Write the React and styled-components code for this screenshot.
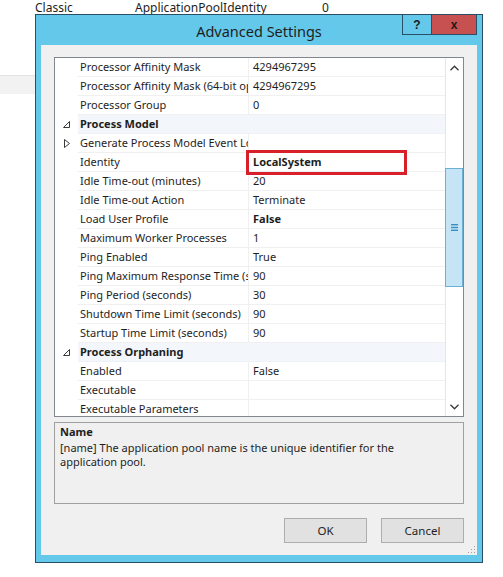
import React from "react";
import styled, { createGlobalStyle } from "styled-components";

const Global = createGlobalStyle`
  html, body { margin: 0; padding: 0; background: #ffffff; }
  body {
    font-family: "Noto Sans", "Open Sans", "Liberation Sans", sans-serif;
    font-size: 11px;
    color: #1e1e1e;
  }
`;

const Desktop = styled.div`
  position: relative;
  width: 503px;
  height: 577px;
  overflow: hidden;
  background: #ffffff;
`;

/* list view of the manager window behind the dialog */
const ListHeader = styled.div`
  display: grid;
  grid-template-columns: 100px 187px 1fr;
  padding-left: 35px;
  height: 14px;
  line-height: 15px;
  font-size: 12px;
  color: #1e1e1e;
  overflow: hidden;
`;

const ListRow = styled.div`
  margin-top: 61px;
  height: 18px;
  width: 40px;
  background: #f2f2f2;
  border-top: 1px solid #e4e4e4;
`;

/* the dialog window */
const Window = styled.div`
  position: absolute;
  left: 35px;
  top: 14px;
  width: 448px;
  height: 549px;
  box-sizing: border-box;
  border: 1px solid #2a4e63;
  background: #63c8e9;
  display: flex;
  flex-direction: column;
  padding: 0 5px 7px 5px;
`;

const TitleBar = styled.div`
  display: grid;
  grid-template-columns: 76px 1fr 76px;
  height: 30px;
  flex: none;
`;

const Title = styled.div`
  grid-column: 2;
  text-align: center;
  font-size: 14.5px;
  line-height: 30px;
  padding-top: 1px;
  color: #1e1e1e;
`;

const Caption = styled.div`
  grid-column: 3;
  display: flex;
  justify-content: flex-end;
  align-items: flex-start;
  margin-top: -1px;
`;

const CaptionButton = styled.div`
  height: 21px;
  width: ${(p) => p.$w}px;
  box-sizing: border-box;
  border: 1px solid #2a4e63;
  background: ${(p) => (p.$close ? "#c75050" : "#63c8e9")};
  margin-left: ${(p) => (p.$close ? "-1px" : "0")};
  display: flex;
  align-items: center;
  justify-content: center;
  font-family: "Liberation Sans", sans-serif;
  font-weight: bold;
  font-size: 12px;
  color: #1b1b1b;
`;

const Client = styled.div`
  flex: 1;
  background: #f0f0f0;
  display: flex;
  flex-direction: column;
  padding: 12px 13px 12px 13px;
  position: relative;
`;

const Grid = styled.div`
  height: 360px;
  box-sizing: border-box;
  border: 1px solid #82878f;
  background: #ffffff;
  display: flex;
  overflow: hidden;
  flex: none;
`;

const Rows = styled.div`
  flex: 1;
  display: flex;
  flex-direction: column;
  overflow: hidden;
`;

const Row = styled.div`
  display: grid;
  grid-template-columns: 23px 171px 1fr;
  height: 19px;
  flex: none;
`;

const Gutter = styled.div`
  display: flex;
  align-items: center;
  justify-content: center;
`;

const NameCell = styled.div`
  background: ${(p) => (p.$category ? "#f3f6fa" : "#ffffff")};
  border-bottom: 1px solid ${(p) => (p.$category ? "#eef1f6" : "#f0f0f0")};
  border-right: 1px solid ${(p) => (p.$category ? "#f3f6fa" : "#f0f0f0")};
  padding-left: 2px;
  line-height: 18px;
  white-space: nowrap;
  overflow: hidden;
  text-overflow: clip;
  font-weight: ${(p) => (p.$category ? "bold" : "normal")};
`;

const ValueCell = styled.div`
  position: relative;
  background: ${(p) => (p.$category ? "#f3f6fa" : "#ffffff")};
  border-bottom: 1px solid ${(p) => (p.$category ? "#eef1f6" : "#f0f0f0")};
  padding-left: 4px;
  line-height: 18px;
  white-space: nowrap;
  font-weight: ${(p) => (p.$bold ? "bold" : "normal")};
`;

const Highlight = styled.div`
  position: absolute;
  z-index: 2;
  left: -3px;
  top: -3px;
  width: 161px;
  height: 25px;
  box-sizing: border-box;
  border: 3px solid #d8202a;
  pointer-events: none;
`;

const HighlightText = styled.span`
  position: relative;
  font-weight: bold;
`;

const ScrollBar = styled.div`
  width: 17px;
  flex: none;
  display: flex;
  flex-direction: column;
  background: #ffffff;
  border-left: 1px solid #e6e6e6;
`;

const ArrowButton = styled.div`
  height: 19px;
  display: flex;
  align-items: center;
  justify-content: center;
  flex: none;
`;

const Track = styled.div`
  flex: 1;
  display: flex;
  flex-direction: column;
  padding-top: 91px;
`;

const Thumb = styled.div`
  height: 119px;
  box-sizing: border-box;
  margin-left: -1px;
  background: #c5e5f6;
  border: 1px solid #6cb0d6;
  display: flex;
  align-items: center;
  justify-content: center;
`;

const Description = styled.div`
  margin-top: 5px;
  height: 82px;
  box-sizing: border-box;
  border: 1px solid #a0a0a0;
  background: #f0f0f0;
  padding: 1px 5px;
  flex: none;
`;

const DescTitle = styled.div`
  font-weight: bold;
  line-height: 16px;
`;

const DescText = styled.div`
  line-height: 14px;
  padding-top: 1px;
  width: 340px;
`;

const Footer = styled.div`
  margin-top: 14px;
  display: flex;
  justify-content: flex-end;
  gap: 14px;
`;

const Button = styled.div`
  width: 83px;
  height: 25px;
  box-sizing: border-box;
  border: 1px solid #adadad;
  background: #e1e1e1;
  display: flex;
  align-items: center;
  justify-content: center;
  font-size: 11.5px;
`;

const Grip = styled.svg`
  position: absolute;
  right: 1px;
  bottom: 1px;
`;

const rows = [
  { name: "Processor Affinity Mask", value: "4294967295" },
  { name: "Processor Affinity Mask (64-bit option)", value: "4294967295" },
  { name: "Processor Group", value: "0" },
  { name: "Process Model", category: true },
  { name: "Generate Process Model Event Log Entry", collapsed: true },
  { name: "Identity", value: "LocalSystem", marked: true },
  { name: "Idle Time-out (minutes)", value: "20" },
  { name: "Idle Time-out Action", value: "Terminate" },
  { name: "Load User Profile", value: "False", bold: true },
  { name: "Maximum Worker Processes", value: "1" },
  { name: "Ping Enabled", value: "True" },
  { name: "Ping Maximum Response Time (seconds)", value: "90" },
  { name: "Ping Period (seconds)", value: "30" },
  { name: "Shutdown Time Limit (seconds)", value: "90" },
  { name: "Startup Time Limit (seconds)", value: "90" },
  { name: "Process Orphaning", category: true },
  { name: "Enabled", value: "False" },
  { name: "Executable", value: "" },
  { name: "Executable Parameters", value: "" },
];

const ExpandedGlyph = () => (
  <svg width="7" height="7" viewBox="0 0 7 7">
    <path d="M6.5 0.5 L6.5 6.5 L0.5 6.5 Z" fill="none" stroke="#3a3a3a" strokeWidth="1" />
  </svg>
);

const CollapsedGlyph = () => (
  <svg width="6" height="9" viewBox="0 0 6 9">
    <path d="M0.5 0.5 L5.5 4.5 L0.5 8.5 Z" fill="none" stroke="#3a3a3a" strokeWidth="1" />
  </svg>
);

const Chevron = ({ down }) => (
  <svg width="9" height="6" viewBox="0 0 9 6">
    <path
      d={down ? "M0.5 0.8 L4.5 4.8 L8.5 0.8" : "M0.5 5.2 L4.5 1.2 L8.5 5.2"}
      fill="none"
      stroke="#3a3a3a"
      strokeWidth="1.3"
    />
  </svg>
);

const GripLines = () => (
  <svg width="7" height="7" viewBox="0 0 7 7">
    <rect x="0" y="0" width="7" height="1.4" fill="#3a8fc0" />
    <rect x="0" y="2.8" width="7" height="1.4" fill="#3a8fc0" />
    <rect x="0" y="5.6" width="7" height="1.4" fill="#3a8fc0" />
  </svg>
);

export default function App() {
  return (
    <Desktop>
      <Global />
      <ListHeader>
        <span>Classic</span>
        <span>ApplicationPoolIdentity</span>
        <span>0</span>
      </ListHeader>
      <ListRow />

      <Window>
        <TitleBar>
          <Title>Advanced Settings</Title>
          <Caption>
            <CaptionButton $w={30}>?</CaptionButton>
            <CaptionButton $w={46} $close>x</CaptionButton>
          </Caption>
        </TitleBar>

        <Client>
          <Grid>
            <Rows>
              {rows.map((r) => (
                <Row key={r.name}>
                  <Gutter>
                    {r.category && <ExpandedGlyph />}
                    {r.collapsed && <CollapsedGlyph />}
                  </Gutter>
                  <NameCell $category={r.category}>{r.name}</NameCell>
                  <ValueCell $category={r.category} $bold={r.bold}>
                    {r.marked ? (
                      <>
                        <Highlight />
                        <HighlightText>{r.value}</HighlightText>
                      </>
                    ) : (
                      r.value
                    )}
                  </ValueCell>
                </Row>
              ))}
            </Rows>
            <ScrollBar>
              <ArrowButton>
                <Chevron />
              </ArrowButton>
              <Track>
                <Thumb>
                  <GripLines />
                </Thumb>
              </Track>
              <ArrowButton>
                <Chevron down />
              </ArrowButton>
            </ScrollBar>
          </Grid>

          <Description>
            <DescTitle>Name</DescTitle>
            <DescText>
              [name] The application pool name is the unique identifier for the
              application pool.
            </DescText>
          </Description>

          <Footer>
            <Button>OK</Button>
            <Button>Cancel</Button>
          </Footer>

          <Grip width="10" height="10" viewBox="0 0 10 10">
            {[
              [8, 2],
              [8, 5],
              [5, 5],
              [8, 8],
              [5, 8],
              [2, 8],
            ].map(([x, y]) => (
              <rect key={`${x}-${y}`} x={x} y={y} width="1" height="1" fill="#a0a0a0" />
            ))}
          </Grip>
        </Client>
      </Window>
    </Desktop>
  );
}
